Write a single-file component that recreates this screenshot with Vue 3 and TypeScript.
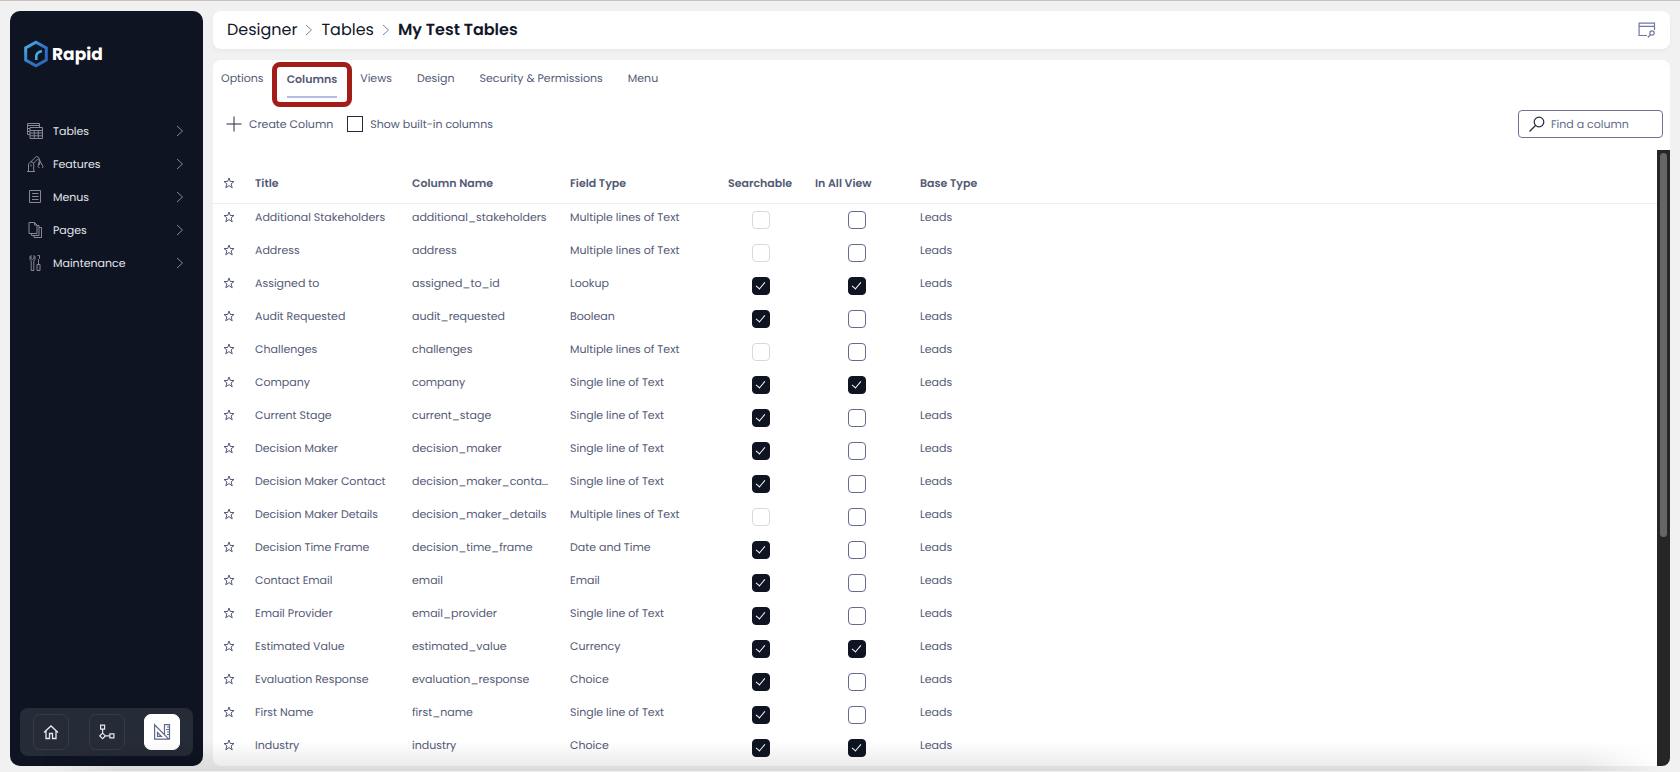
<script setup lang="ts">
import { ref } from 'vue'

interface Column {
  title: string
  name: string
  type: string
  searchable: boolean
  inAll: boolean
}

const menu = ['Tables', 'Features', 'Menus', 'Pages', 'Maintenance']
const tabs = ['Options', 'Columns', 'Views', 'Design', 'Security & Permissions', 'Menu']
const active = ref('Columns')
const builtIn = ref(false)
const query = ref('')

const MULTI = 'Multiple lines of Text'
const SINGLE = 'Single line of Text'

const make = (title: string, name: string, type: string, inAll = false): Column => ({
  title, name, type, searchable: type !== MULTI, inAll,
})

const columns = ref<Column[]>([
  make('Additional Stakeholders', 'additional_stakeholders', MULTI),
  make('Address', 'address', MULTI),
  make('Assigned to', 'assigned_to_id', 'Lookup', true),
  make('Audit Requested', 'audit_requested', 'Boolean'),
  make('Challenges', 'challenges', MULTI),
  make('Company', 'company', SINGLE, true),
  make('Current Stage', 'current_stage', SINGLE),
  make('Decision Maker', 'decision_maker', SINGLE),
  make('Decision Maker Contact', 'decision_maker_contact', SINGLE),
  make('Decision Maker Details', 'decision_maker_details', MULTI),
  make('Decision Time Frame', 'decision_time_frame', 'Date and Time'),
  make('Contact Email', 'email', 'Email'),
  make('Email Provider', 'email_provider', SINGLE),
  make('Estimated Value', 'estimated_value', 'Currency', true),
  make('Evaluation Response', 'evaluation_response', 'Choice'),
  make('First Name', 'first_name', SINGLE),
  make('Industry', 'industry', 'Choice', true),
])
</script>

<template>
  <div class="app">
    <aside class="sidebar">
      <a class="logo" href="#">
        <svg width="24" height="28" viewBox="0 0 24 28" fill="none">
          <defs>
            <linearGradient id="brand" x1="0" y1="0" x2="1" y2="1">
              <stop offset="0" stop-color="#4db4e6" />
              <stop offset="0.5" stop-color="#3079cc" />
              <stop offset="1" stop-color="#2b62b4" />
            </linearGradient>
          </defs>
          <path d="M12 2.200 22.300 8v12L12 25.800 1.700 20V8z" stroke="url(#brand)" stroke-width="3" />
          <path d="M12.300 20v-4.200c0-2.600 1.600-3.600 5.700-4.800" stroke="#48a9e4" stroke-width="2.600" />
        </svg>
        <span>Rapid</span>
      </a>

      <nav class="menu">
        <a v-for="item in menu" :key="item" href="#">
          <svg class="menu-icon" width="18" height="18" viewBox="0 0 18 18" fill="none" stroke="currentColor">
            <template v-if="item === 'Tables'">
              <path d="M4 5.500h12.500v11H4zM4 8.500h12.500M4 11h12.500M4 13.800h12.500M8.200 8.500v8M12.300 8.500v8" />
              <path d="M4 12.500H1.500v-11h12v4M1.500 3.500h12M1.500 6.500H4M1.500 9.500H4" />
            </template>
            <template v-else-if="item === 'Features'">
              <path d="M1 16.500h8M2.500 16.500V8.800L4.500 7h2l1.200 1.500v8M5 9.500v2M4.500 7l5.800-5.500 2.200.8L14 6M7.200 8.500l4.500-4.500M12 4.500 14 6l3 5.500-.5 1.500M13 6.500l-1 5 1.500 1.500M14 6l-.5 4" />
            </template>
            <template v-else-if="item === 'Menus'">
              <path d="M3.500 2.500h11v12h-11zM6 5.500h6.500M6 8.500h6.500M6 11.500h6.500" />
            </template>
            <template v-else-if="item === 'Pages'">
              <path d="M3 1.500h5.500L11 4v8.500H3zM8.500 1.500V4H11M11 4.500h2v10H5.500v-2M13 6.500h2.500v10H8v-2" />
            </template>
            <template v-else>
              <path d="M5 1.500v3L6.500 5.500 8 4.500v-3l1 1v3L7.800 7v9.500H5.200V7L4 5.500v-3zM11.500 1.500h2v3l-1 1v5M12.500 8v2.500M11 10.500h3v6h-3z" />
            </template>
          </svg>
          <span>{{ item }}</span>
          <svg width="8" height="12" viewBox="0 0 8 12" fill="none" stroke="currentColor"><path d="m1 1 5.500 5L1 11" /></svg>
        </a>
      </nav>

      <div class="dock">
        <button aria-label="Home">
          <svg width="16" height="16" viewBox="0 0 16 16" fill="none" stroke="currentColor" stroke-width="1.300">
            <path d="M1 8.500 8 2l7 6.500M3 7v7.500h3.500V9.500h3v5H13V7" />
          </svg>
        </button>
        <button aria-label="Workflow">
          <svg width="16" height="16" viewBox="0 0 16 16" fill="none" stroke="currentColor" stroke-width="1.200">
            <path d="M1.600 1.100h4v4h-4zM10.900 9.900h4v4h-4zM3.600 5.100v4M6.400 11.900h4.500M3.600 9.100l2.800 2.800-2.800 2.800-2.800-2.800z" />
          </svg>
        </button>
        <button class="on" aria-label="Designer">
          <svg width="18" height="18" viewBox="0 0 18 18" fill="none" stroke="currentColor" stroke-width="1.200">
            <path d="M1.600 1.800v14.400h14.200zM4.500 9.500v3.900h3.900zM11.500 11.800V1.600h5v14.600M14 4h2.500M13 6.500h3.500M14 9h2.500M14 11.500h2.500" />
          </svg>
        </button>
      </div>
    </aside>

    <main class="main">
      <header class="topbar">
        <nav class="crumbs" aria-label="Breadcrumb">
          <a href="#">Designer</a>
          <svg width="8" height="12" viewBox="0 0 8 12" fill="none" stroke="currentColor"><path d="m1 1 5.500 5L1 11" /></svg>
          <a href="#">Tables</a>
          <svg width="8" height="12" viewBox="0 0 8 12" fill="none" stroke="currentColor"><path d="m1 1 5.500 5L1 11" /></svg>
          <strong>My Test Tables</strong>
        </nav>
        <button class="plain" aria-label="Preview page">
          <svg width="18" height="16" viewBox="0 0 18 16" fill="none" stroke="currentColor" stroke-width="1.200">
            <path d="M9 13.500H1.100V1.100h15.400v7M1.100 4.300h15.400M9.800 15.500l2.700-2.900" />
            <circle cx="14" cy="11" r="2.200" />
          </svg>
        </button>
      </header>

      <section class="panel">
        <div class="tabs" role="tablist">
          <button
            v-for="tab in tabs"
            :key="tab"
            role="tab"
            :aria-selected="active === tab"
            :class="{ current: active === tab }"
            @click="active = tab"
          >{{ tab }}</button>
        </div>

        <div class="toolbar">
          <button class="plain create">
            <svg width="16" height="16" viewBox="0 0 16 16" stroke="#252a3c"><path d="M8 .5v15M.5 8h15" /></svg>
            Create Column
          </button>
          <label class="built-in">
            <input v-model="builtIn" type="checkbox" />
            Show built-in columns
          </label>
          <label class="search">
            <svg width="16" height="16" viewBox="0 0 16 16" fill="none" stroke="#252a3c" stroke-width="1.200">
              <circle cx="10" cy="6" r="4.800" />
              <path d="m6.500 9.500-6 6" />
            </svg>
            <input v-model="query" type="text" placeholder="Find a column" aria-label="Find a column" />
          </label>
        </div>

        <div class="grid-area">
          <div class="grid-scroll">
            <table>
              <colgroup>
                <col class="c-star" /><col class="c-title" /><col class="c-text" /><col class="c-text" />
                <col class="c-check" /><col class="c-all" /><col />
              </colgroup>
              <thead>
                <tr>
                  <th class="star">
                    <svg width="12" height="12" viewBox="0 0 12 12" fill="none" stroke="currentColor"><path d="m6 1 1.300 3.500H11L8.100 6.900l1.100 3.900L6 8.600l-3.200 2.200 1.100-3.900L1 4.500h3.700z" /></svg>
                  </th>
                  <th>Title</th>
                  <th>Column Name</th>
                  <th>Field Type</th>
                  <th>Searchable</th>
                  <th>In All View</th>
                  <th>Base Type</th>
                </tr>
              </thead>
              <tbody>
                <tr v-for="col in columns" :key="col.name">
                  <td class="star">
                    <svg width="12" height="12" viewBox="0 0 12 12" fill="none" stroke="currentColor"><path d="m6 1 1.300 3.500H11L8.100 6.900l1.100 3.900L6 8.600l-3.200 2.200 1.100-3.900L1 4.500h3.700z" /></svg>
                  </td>
                  <td>{{ col.title }}</td>
                  <td>{{ col.name }}</td>
                  <td>{{ col.type }}</td>
                  <td class="tick">
                    <input v-model="col.searchable" type="checkbox" :disabled="col.type === MULTI" :aria-label="`${col.title} searchable`" />
                  </td>
                  <td class="tick">
                    <input v-model="col.inAll" type="checkbox" :aria-label="`${col.title} in all view`" />
                  </td>
                  <td>Leads</td>
                </tr>
              </tbody>
            </table>
          </div>
          <div class="track"><div class="thumb"></div></div>
        </div>
      </section>
    </main>
    <div class="fade"></div>
  </div>
</template>

<style>
body {
  margin: 0;
}
</style>

<style scoped>
* {
  box-sizing: border-box;
}
.app {
  display: flex;
  gap: 10px;
  height: 100vh;
  padding: 10px 10px 6px;
  border-top: 1px solid #cdc0c0;
  background: #f1f1f1;
  color: #535a76;
  font: 11px/18px Poppins, Inter, "Open Sans", sans-serif;
  text-rendering: geometricPrecision;
  overflow: hidden;
  position: relative;
}
button,
input {
  font: inherit;
  color: inherit;
  text-rendering: inherit;
}
a {
  color: inherit;
  text-decoration: none;
}
button {
  padding: 0;
  border: 0;
  background: none;
  cursor: pointer;
}
svg {
  display: block;
  flex: none;
}
.sidebar {
  display: flex;
  flex-direction: column;
  flex: none;
  width: 193px;
  padding: 28px 10px 10px;
  border-radius: 10px;
  background: #0e1422;
}
.logo {
  display: flex;
  align-items: center;
  gap: 4px;
  height: 30px;
  padding-left: 4px;
  color: #fff;
  font-size: 17px;
  font-weight: 700;
}
.menu {
  display: flex;
  flex-direction: column;
  margin-top: 45px;
}
.menu a {
  display: flex;
  align-items: center;
  height: 33px;
  padding: 0 9px 0 6px;
  color: #85889a;
}
.menu span {
  flex: 1;
  margin-left: 9px;
  color: #e4e6ec;
}
.dock {
  display: flex;
  justify-content: space-between;
  margin-top: auto;
  padding: 6px 13px;
  border-radius: 8px;
  background: #262b38;
}
.dock button {
  display: grid;
  place-items: center;
  width: 36px;
  height: 36px;
  border: 1px solid #373b48;
  border-radius: 7px;
  color: #e8e9ee;
}
.dock .on {
  border-color: #fff;
  background: #fff;
  color: #5f678a;
}
.main {
  display: flex;
  flex: 1;
  flex-direction: column;
  gap: 11px;
  min-width: 0;
}
.topbar {
  display: flex;
  align-items: center;
  justify-content: space-between;
  flex: none;
  height: 38px;
  padding: 0 14px;
  border-radius: 8px;
  background: #fff;
  box-shadow: 0 2px 4px #0000000a;
}
.crumbs {
  display: flex;
  align-items: center;
  gap: 8px;
  color: #7d83a0;
  font-size: 16px;
}
.crumbs a,
.crumbs strong {
  color: #12172a;
}
.crumbs strong {
  font-weight: 600;
}
.topbar .plain {
  color: #7079a3;
}
.panel {
  display: flex;
  flex: 1;
  flex-direction: column;
  min-height: 0;
  border-radius: 8px;
  background: #fff;
  overflow: hidden;
}
.tabs {
  display: flex;
  gap: 25px;
  height: 40px;
  padding-left: 8px;
  flex: none;
}
.tabs button {
  height: 36px;
  white-space: nowrap;
}
.tabs .current {
  position: relative;
  height: 45px;
  margin: 2px -17px 0;
  padding: 0 10px 12px;
  border: 5px solid #a21c18;
  border-radius: 8px;
  font-weight: 600;
}
.tabs .current::after {
  content: "";
  position: absolute;
  right: 10px;
  bottom: 4px;
  left: 10px;
  height: 2px;
  background: #b3bbe0;
}
.toolbar {
  display: flex;
  align-items: center;
  flex: none;
  height: 50px;
  padding: 0 7px 2px 13px;
}
.create {
  display: flex;
  align-items: center;
  gap: 7px;
}
.built-in {
  display: flex;
  align-items: center;
  gap: 7px;
  margin-left: 14px;
}
.built-in input {
  appearance: none;
  width: 16px;
  height: 16px;
  margin: 0;
  border: 1px solid #252a3c;
}
.search {
  display: flex;
  align-items: center;
  gap: 6px;
  width: 145px;
  height: 28px;
  margin-left: auto;
  padding: 0 10px;
  border: 1px solid #6d7493;
  border-radius: 4px;
}
.search input {
  flex: 1;
  width: 0;
  padding: 0;
  border: 0;
  outline: 0;
  background: none;
}
.search input::placeholder {
  color: #626a88;
  opacity: 1;
}
.grid-area {
  display: flex;
  flex: 1;
  min-height: 0;
}
.grid-scroll {
  flex: 1;
  min-width: 0;
  overflow: hidden;
}
table {
  width: 100%;
  border-collapse: collapse;
  table-layout: fixed;
}
.c-star {
  width: 34px;
}
.c-title {
  width: 157px;
}
.c-text {
  width: 158px;
}
.c-check {
  width: 87px;
}
.c-all {
  width: 105px;
}
th,
td {
  padding: 0 10px 0 8px;
  overflow: hidden;
  text-align: left;
  text-overflow: ellipsis;
  white-space: nowrap;
}
th {
  height: 53px;
  padding-top: 14px;
  padding-right: 0;
  border-bottom: 1px solid #efeff2;
  font-weight: 600;
}
td {
  height: 33px;
  padding-bottom: 5px;
}
.star {
  padding-left: 10px;
}
.tick {
  padding: 1px 6px 0 0;
  text-align: center;
}
.tick input {
  appearance: none;
  display: block;
  width: 18px;
  height: 18px;
  margin: 0 auto;
  border: 1px solid #646b8c;
  border-radius: 4px;
  background: #fff;
}
.tick input:disabled {
  border-color: #d9d9dd;
}
.tick input:checked {
  border-color: #0e1422;
  background: #0e1422;
}
.tick input:checked::after {
  content: "";
  display: block;
  width: 4px;
  height: 8px;
  margin: 2px auto 0;
  border: solid #fff;
  border-width: 0 1px 1px 0;
  transform: rotate(40deg);
}
.track {
  flex: none;
  width: 13px;
  padding: 3px;
  background: #262626;
}
.thumb {
  height: 63%;
  border-radius: 4px;
  background: #666;
}
.fade {
  position: absolute;
  right: 20px;
  bottom: 1px;
  left: 40px;
  height: 30px;
  background: linear-gradient(#0000, #00000018);
  mask-image: linear-gradient(90deg, #0000, #000 80px, #000 calc(100% - 80px), #0000);
  pointer-events: none;
}
</style>
